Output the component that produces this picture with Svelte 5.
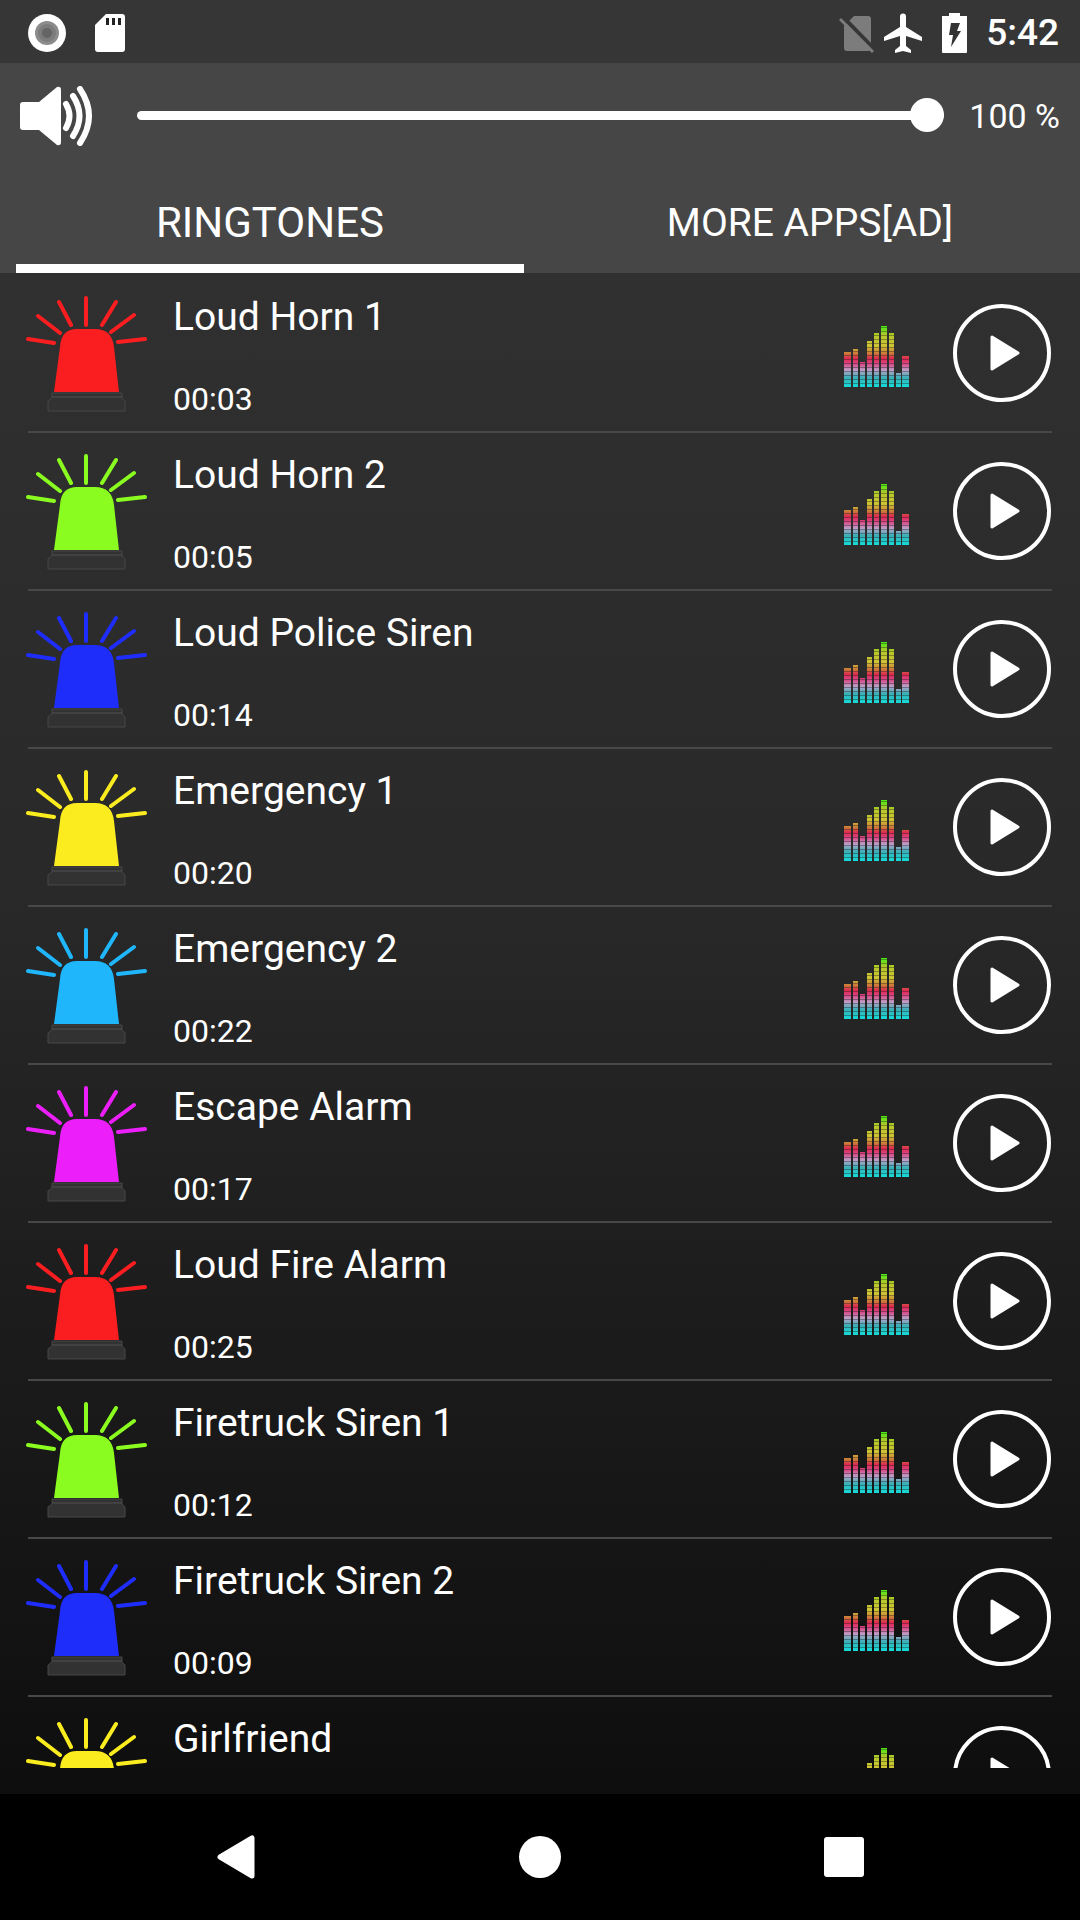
<script lang="ts">
  interface Ringtone {
    title: string;
    length?: string;
    color: string;
  }

  const ringtones: Ringtone[] = [
    { title: 'Loud Horn 1', length: '00:03', color: '#fb1e20' },
    { title: 'Loud Horn 2', length: '00:05', color: '#8afc1f' },
    { title: 'Loud Police Siren', length: '00:14', color: '#1f2dfb' },
    { title: 'Emergency 1', length: '00:20', color: '#fbec1f' },
    { title: 'Emergency 2', length: '00:22', color: '#1fb6fb' },
    { title: 'Escape Alarm', length: '00:17', color: '#ec1ffb' },
    { title: 'Loud Fire Alarm', length: '00:25', color: '#fb1e20' },
    { title: 'Firetruck Siren 1', length: '00:12', color: '#8afc1f' },
    { title: 'Firetruck Siren 2', length: '00:09', color: '#1f2dfb' },
    { title: 'Girlfriend', color: '#fbec1f' },
  ];

  // x, width and height of each equalizer bar
  const bars = [
    [1, 7, 35],
    [10, 5, 38],
    [17, 5, 25],
    [24, 5, 46],
    [31, 5, 54],
    [38, 6, 61],
    [46, 5, 54],
    [53, 5, 14],
    [59, 7, 31],
  ];

  let volume = $state(100);
  let tab = $state(0);
</script>

<div class="screen">
  <div class="status">
    <svg width="38" height="40" viewBox="0 0 38 40">
      <circle cx="19" cy="20" r="19" fill="#fff" />
      <circle cx="19" cy="20" r="12" fill="#8c8c8c" />
      <circle cx="19" cy="20" r="9" fill="#7c7c7c" />
      <circle cx="19" cy="20" r="5" fill="#646464" />
    </svg>
    <svg class="sd" width="32" height="40" viewBox="0 0 32 40">
      <path d="M12 1h16q3 0 3 3v32q0 3-3 3H4q-3 0-3-3V12z" fill="#fff" />
      <path d="M12 5h3v7h-3zM18 5h3v7h-3zM24 5h3v7h-3z" fill="#222" />
    </svg>
    <span class="spacer"></span>
    <svg width="36" height="40" viewBox="0 0 36 40">
      <path d="M15 3h14q3 0 3 3v29q0 3-3 3H8q-3 0-3-3V13z" fill="#7c7c7c" />
      <path d="M3 3L37 38" stroke="#363636" stroke-width="4" />
      <path d="M1 6L34 39" stroke="#7c7c7c" stroke-width="3" />
    </svg>
    <svg class="plane" width="38" height="40" viewBox="0 0 38 40">
      <path
        d="M38 28v-4L22 14V3.500q0-3-3-3t-3 3V14L0 24v4l16-5v10l-5 4v3l8-2 8 2v-3l-5-4V23z"
        fill="#fff"
      />
    </svg>
    <svg class="battery" width="26" height="40" viewBox="0 0 26 40">
      <path d="M7 0h11v3h7v36q0 1-1 1H1q-1 0-1-1V3h7z" fill="#fff" />
      <path d="M9 10h9l-3 8h4L9 34l2-12H7z" fill="#333" />
    </svg>
    <time class="clock">5:42</time>
  </div>

  <header>
    <div class="volume">
      <svg width="74" height="60" viewBox="0 0 74 60">
        <path d="M3 16h16L37 1q4-1 4 3v52q0 4-4 3L19 44H3q-3 0-3-3V19q0-3 3-3z" fill="#fff" />
        <g fill="none" stroke="#fff" stroke-width="6" stroke-linecap="round">
          <path d="M46 18q7 12 0 24" />
          <path d="M53 10q13 20 0 40" />
          <path d="M60 3q18 27 0 54" />
        </g>
      </svg>
      <input type="range" min="0" max="100" bind:value={volume} aria-label="Volume" />
      <output>{volume} %</output>
    </div>
    <nav class="tabs">
      <button class:active={tab === 0} onclick={() => (tab = 0)}>RINGTONES</button>
      <button class:active={tab === 1} onclick={() => (tab = 1)}>MORE APPS[AD]</button>
    </nav>
  </header>

  <svg class="defs" width="0" height="0" aria-hidden="true">
    <linearGradient id="eq" gradientUnits="userSpaceOnUse" x1="0" y1="0" x2="0" y2="62">
      <stop offset="0" stop-color="#40f010" />
      <stop offset="0.1" stop-color="#80d820" />
      <stop offset="0.16" stop-color="#b4c828" />
      <stop offset="0.34" stop-color="#d0c434" />
      <stop offset="0.46" stop-color="#cc7838" />
      <stop offset="0.54" stop-color="#e02850" />
      <stop offset="0.63" stop-color="#d84888" />
      <stop offset="0.73" stop-color="#bca0c8" />
      <stop offset="0.85" stop-color="#38b0b8" />
      <stop offset="1" stop-color="#14dcd8" />
    </linearGradient>
  </svg>

  <main>
    <ul>
      {#each ringtones as tone}
        <li>
          <svg class="siren" width="122" height="118" viewBox="0 0 122 118">
            <path
              d="M2 44L28 48M12 21L34 38M33 7L45 30M60 3V30M90 7L76 30M108 20L85 37M119 44L92 47"
              stroke={tone.color}
              stroke-width="4"
              stroke-linecap="round"
            />
            <path d="M34 52Q35 34 51 34H69Q86 34 88 52L93 97H28z" fill={tone.color} />
            <path class="base" d="M26 98H96V103L99 106V116H22V106L26 103z" />
            <path d="M26 102H96" stroke="#505050" />
          </svg>
          <div class="info">
            <span class="title">{tone.title}</span>
            <span class="length">{tone.length ?? ''}</span>
          </div>
          <svg class="eq" width="68" height="62" viewBox="0 0 68 62">
            {#each bars as [x, w, h]}
              <rect {x} y={62 - h} width={w} height={h} fill="url(#eq)" />
              <path class="gaps" d="M{x + w / 2} 59V{62 - h}" stroke-width={w} />
            {/each}
          </svg>
          <button class="play" aria-label="Play {tone.title}">
            <svg width="100" height="100" viewBox="0 0 100 100">
              <circle cx="50" cy="50" r="47" fill="none" stroke="#fff" stroke-width="4" />
              <path d="M40 34L66 50 40 66z" fill="#fff" stroke="#fff" stroke-width="3" stroke-linejoin="round" />
            </svg>
          </button>
        </li>
      {/each}
    </ul>
  </main>

  <footer>
    <button aria-label="Back">
      <svg width="44" height="44" viewBox="0 0 44 44">
        <path d="M6 22L38 3V41z" fill="#fff" stroke="#fff" stroke-width="5" stroke-linejoin="round" />
      </svg>
    </button>
    <button aria-label="Home">
      <svg width="44" height="44" viewBox="0 0 44 44"><circle cx="22" cy="22" r="21" fill="#fff" /></svg>
    </button>
    <button aria-label="Recent apps">
      <svg width="44" height="44" viewBox="0 0 44 44">
        <rect x="2" y="2" width="40" height="40" rx="3" fill="#fff" />
      </svg>
    </button>
  </footer>
</div>

<style>
  :global(body) {
    margin: 0;
    background: #000;
  }
  .screen {
    height: 100vh;
    display: flex;
    flex-direction: column;
    overflow: hidden;
    background: #000;
    color: #fff;
    font-family: Roboto, sans-serif;
  }
  svg {
    display: block;
    flex: none;
  }
  button {
    padding: 0;
    border: 0;
    background: none;
    color: inherit;
    font-family: inherit;
    cursor: pointer;
  }
  .defs {
    position: absolute;
  }

  .status {
    flex: none;
    display: flex;
    align-items: center;
    height: 63px;
    padding: 2px 21px 0 28px;
    box-sizing: border-box;
    background: #363636;
  }
  .sd { margin-left: 28px; }
  .spacer { flex: 1; }
  .plane { margin-left: 9px; }
  .battery { margin-left: 20px; }
  .clock {
    margin-left: 18px;
    font-size: 37px;
    font-weight: 500;
    line-height: 40px;
  }

  header {
    flex: none;
    background: #464646;
  }
  .volume {
    display: flex;
    align-items: center;
    height: 106px;
    padding: 0 20px;
  }
  input[type='range'] {
    flex: 1;
    min-width: 0;
    height: 34px;
    margin: 0 25px 2px 43px;
    appearance: none;
    background: none;
  }
  input[type='range']::-webkit-slider-runnable-track {
    height: 9px;
    border-radius: 5px;
    background: #fff;
  }
  input[type='range']::-webkit-slider-thumb {
    appearance: none;
    width: 34px;
    height: 34px;
    margin-top: -13px;
    border-radius: 50%;
    background: #fff;
  }
  output {
    font-size: 34px;
    line-height: 40px;
  }
  .tabs {
    display: flex;
  }
  .tabs button {
    flex: 1;
    height: 104px;
    margin: 0 16px;
    padding-top: 12px;
    border-bottom: 9px solid transparent;
    font-size: 39px;
    line-height: 48px;
  }
  .tabs .active {
    border-color: #fff;
    font-size: 42px;
  }

  main {
    flex: 1;
    min-height: 0;
    padding-bottom: 26px;
    background: linear-gradient(#303030, #292929 40%, #0e0e0e);
  }
  ul {
    height: 100%;
    margin: 0;
    padding: 2px 28px 0;
    box-sizing: border-box;
    overflow: hidden;
    list-style: none;
  }
  li {
    display: flex;
    align-items: center;
    height: 156px;
    border-bottom: 2px solid #484848;
  }
  .siren {
    margin: 2px 0 0 -2px;
  }
  .base {
    fill: #323232;
    stroke: #464646;
  }
  .info {
    flex: 1;
    display: flex;
    flex-direction: column;
    gap: 38px;
    margin-left: 25px;
    padding-top: 6px;
  }
  .title {
    font-size: 39px;
    line-height: 48px;
  }
  .length {
    height: 40px;
    font-size: 32px;
    line-height: 40px;
  }
  .eq {
    margin-top: 6px;
  }
  .gaps {
    stroke: #202020;
    stroke-opacity: 0.4;
    stroke-dasharray: 1 3;
  }
  .play {
    margin-left: 41px;
  }

  footer {
    flex: none;
    display: flex;
    justify-content: center;
    align-items: center;
    gap: 260px;
    height: 126px;
  }
</style>
